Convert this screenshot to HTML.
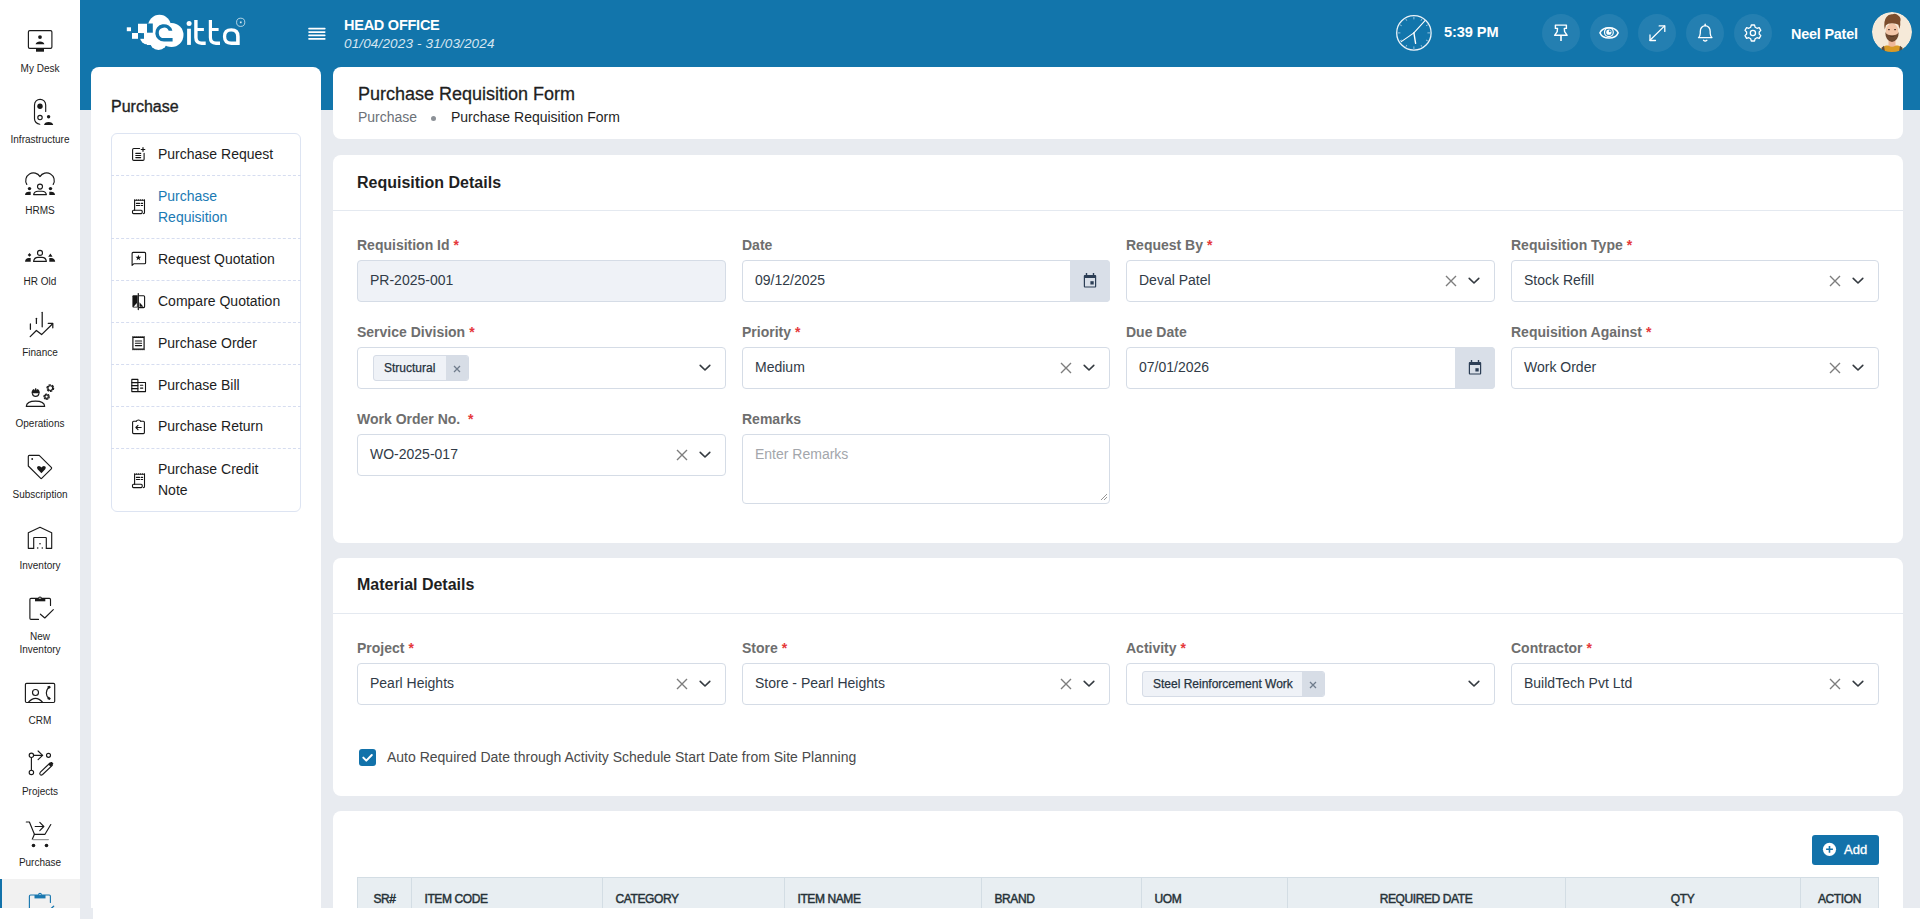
<!DOCTYPE html>
<html><head><meta charset="utf-8">
<style>
*{box-sizing:border-box;margin:0;padding:0}
html,body{width:1920px;height:919px;overflow:hidden;background:#fff;font-family:"Liberation Sans",sans-serif;color:#222}
.t{position:absolute;line-height:1;white-space:nowrap}
#rail{position:absolute;left:0;top:0;width:80px;height:909px;background:#fff}
#bg{position:absolute;left:80px;top:0;width:1840px;height:908px;background:#e8ebf0}
#hdr{position:absolute;left:80px;top:0;width:1840px;height:110px;background:#1275ab}
.card{position:absolute;background:#fff;border-radius:8px}
.rn{position:absolute;left:0;width:80px;text-align:center;font-size:10px;color:#1e1e1e;line-height:1}
.pl{position:absolute;left:111px;width:190px;border-top:1px dashed #d6ddf0}
.pt{position:absolute;left:158px;font-size:14px;line-height:1;color:#1d1d1d;white-space:nowrap}
.lbl{position:absolute;font-size:14px;font-weight:bold;line-height:1;color:#6e6e6e;white-space:nowrap}
.lbl i{font-style:normal;color:#e5383b;margin-left:4px}
.inp{position:absolute;height:42px;border:1px solid #d5dce6;border-radius:4px;background:#fff}
.val{position:absolute;font-size:14px;line-height:1;color:#313b47;white-space:nowrap}
.ctitle{position:absolute;font-size:16px;font-weight:bold;line-height:1;color:#1f1f1f;white-space:nowrap}
.hr{position:absolute;height:1px;background:#e4e9f0}
.hb{position:absolute;top:14px;width:38px;height:38px;border-radius:50%;background:rgba(255,255,255,0.08)}
.th{position:absolute;top:893px;font-size:12px;line-height:1;color:#263238;white-space:nowrap;letter-spacing:-0.4px;-webkit-text-stroke:0.45px #263238}
.tsep{position:absolute;top:877px;width:1px;height:31px;background:#d3dde4}
</style></head><body>
<div id="rail"></div>
<div id="bg"></div>
<div id="hdr"></div>
<svg style="position:absolute;left:0;top:0" width="80" height="909" viewBox="0 0 80 909" fill="none" stroke="#1a1a1a" stroke-width="1.15" stroke-linecap="round" stroke-linejoin="round">
<!-- My Desk -->
<rect x="28.4" y="30.6" width="23.5" height="17.8" rx="1.4"/>
<rect x="36" y="48.6" width="8" height="3.1" fill="#1a1a1a" stroke="none"/>
<circle cx="40" cy="37.1" r="1.9" fill="#1a1a1a" stroke="none"/>
<path d="M35.6 44.2 Q36.4 41.6 40 41.6 Q43.6 41.6 44.4 44.2 Z" fill="#1a1a1a" stroke="none"/>
<!-- Infrastructure -->
<path d="M45.7 111.4 V104.9 A5.6 5.6 0 0 0 40.1 99.3 A5.6 5.6 0 0 0 34.5 104.9 V118.7 A5.5 5.5 0 0 0 39.8 124.2"/>
<circle cx="40" cy="106.2" r="2.7" fill="#1a1a1a" stroke="none"/>
<circle cx="40" cy="117.5" r="2.2"/>
<circle cx="48.6" cy="116.8" r="1.7" fill="#1a1a1a" stroke="none"/>
<path d="M44 124.9 Q44.6 121.9 48.6 121.9 Q52.6 121.9 53.2 124.9 Z" fill="#1a1a1a" stroke="none"/>
<!-- HRMS -->
<path d="M26.8 184.4 A7.4 7.4 0 0 1 40 176.6 A7.4 7.4 0 0 1 53.2 184.4"/>
<circle cx="29.5" cy="188.6" r="1.7" fill="#1a1a1a" stroke="none"/>
<path d="M25 195 Q25.4 191.8 28.8 191.8 H30.7 V195 Z" fill="#1a1a1a" stroke="none"/>
<circle cx="40" cy="186.6" r="2.5"/>
<path d="M33.6 194.6 Q34.2 191.2 38 191.2 H42 Q45.8 191.2 46.4 194.6 Z"/>
<circle cx="50.5" cy="188.6" r="1.7" fill="#1a1a1a" stroke="none"/>
<path d="M49.3 195 V191.8 H51.2 Q54.6 191.8 55 195 Z" fill="#1a1a1a" stroke="none"/>
<!-- HR Old -->
<path d="M29.5 253 L31.3 254.9 L29.5 256.7 L27.7 254.9 Z" fill="#1a1a1a" stroke="none"/>
<path d="M25 261.8 Q25.4 258.1 28.8 258.1 H30.7 V261.8 Z" fill="#1a1a1a" stroke="none"/>
<circle cx="40" cy="252.9" r="2.5"/>
<path d="M33.6 261.4 Q34.2 257.4 38 257.4 H42 Q45.8 257.4 46.4 261.4 Z"/>
<path d="M50.4 253.5 L52.6 256.8 H48.2 Z" fill="#1a1a1a" stroke="none"/>
<path d="M49.3 261.8 V258.1 H51.2 Q54.6 258.1 55.2 261.8 Z" fill="#1a1a1a" stroke="none"/>
<!-- Finance -->
<g stroke-width="1.25">
<path d="M30.4 323.9 V329.3"/><path d="M36.4 318.3 V323.4"/><path d="M42.2 312.3 V326.8"/>
<path d="M30.2 336.6 L36.4 330.5 L41.6 334.6 L52.4 324"/><path d="M48.2 323.3 H52.8 V327.8"/>
</g>
<!-- Operations -->
<path d="M31.5 393.2 Q31.5 389.6 34 388.9 L34.5 390.5 L35.2 388.3 H36.2 L36.8 390.5 L37.3 388.9 Q39.8 389.6 39.8 393.2 Z" fill="#1a1a1a" stroke="none"/>
<path d="M32.4 393.6 A3.3 3.3 0 0 0 38.9 393.6"/>
<path d="M26.3 406.4 Q26.6 401.1 35.5 401.1 Q44.4 401.1 44.7 406.4 Z"/>
<circle cx="50.3" cy="388.1" r="2.4"/>
<circle cx="50.3" cy="388.1" r="3.3" stroke-width="1.3" stroke-dasharray="1.4 2.05"/>
<circle cx="46.6" cy="396.7" r="1.7"/>
<circle cx="46.6" cy="396.7" r="2.6" stroke-width="1.3" stroke-dasharray="1.2 1.5"/>
<!-- Subscription -->
<path d="M28.3 456.4 Q28.3 455.3 29.4 455.3 H39.2 L51.3 467.4 Q52 468.1 51.3 468.8 L41.9 478.2 Q41.2 478.9 40.5 478.2 L28.3 466 Z"/>
<circle cx="32.2" cy="459" r="0.9" fill="#1a1a1a" stroke="none"/>
<path d="M41.4 473.2 L37.6 469.3 Q36.4 467.9 37.5 466.6 Q38.9 465.4 40.3 466.5 L41.4 467.5 L42.5 466.5 Q43.9 465.4 45.3 466.6 Q46.4 467.9 45.2 469.3 Z" fill="#1a1a1a" stroke="none"/>
<!-- Inventory -->
<path d="M33.7 548.3 H28.3 V532.7 L40 527.3 L51.7 532.7 V548.3 H46.3"/>
<path d="M33.7 548.3 V538 Q33.7 537.5 34.2 537.5 H45.8 Q46.3 537.5 46.3 538 V548.3"/>
<circle cx="40" cy="543.7" r="0.8" fill="#1a1a1a" stroke="none"/>
<circle cx="37.7" cy="548" r="0.8" fill="#1a1a1a" stroke="none"/>
<circle cx="42.3" cy="548" r="0.8" fill="#1a1a1a" stroke="none"/>
<!-- New Inventory -->
<path d="M38.5 619.4 H31 Q29.9 619.4 29.9 618.3 V599.5 Q29.9 598.4 31 598.4 H49.4 Q50.5 598.4 50.5 599.5 V605.5"/>
<rect x="35" y="598.4" width="10.3" height="2.9" fill="#1a1a1a" stroke="none"/>
<circle cx="40" cy="598.3" r="1.3" fill="#fff"/>
<path d="M40.4 614.2 L44.8 618 L53.3 609.7"/>
<!-- CRM -->
<rect x="25.4" y="683.3" width="29.3" height="19.2" rx="1.2"/>
<circle cx="35.5" cy="692.5" r="3"/>
<path d="M28.3 702.3 Q35.5 694.3 42.7 702.3"/>
<path d="M48.5 687.3 Q44.2 692.8 48.5 698.4"/>
<path d="M47.3 686.6 L49.6 685.8 L50.9 687.3 L48.6 689.2 Z" fill="#1a1a1a" stroke="none"/>
<path d="M47.3 699.1 L49.6 699.9 L50.9 698.4 L48.6 696.5 Z" fill="#1a1a1a" stroke="none"/>
<!-- Projects -->
<circle cx="31.4" cy="755.3" r="2.2"/>
<circle cx="31.4" cy="772.4" r="2.2"/>
<circle cx="48.5" cy="755.3" r="2"/>
<path d="M31.4 757.5 V770.2"/><path d="M33.6 755.3 H42.6"/><path d="M38.1 751 L42.6 755.3 L38.1 759.7"/>
<path d="M40.4 772.2 L50 763 L52.3 765.3 L42.6 774.5 Q41.2 775.6 40.2 774.6 Q39.2 773.5 40.4 772.2 Z"/>
<path d="M48.4 764.5 L50.9 762.1 Q51.4 761.7 51.9 762.1 L53.1 763.3 Q53.5 763.8 53.1 764.3 L50.6 766.7 Z" fill="#1a1a1a" stroke="none"/>
<!-- Purchase -->
<path d="M26.3 822 H29.4 L34.4 834.3 H45 L50.8 824.5"/>
<path d="M34.4 834.3 L32.3 839.2"/>
<path d="M33 839.6 H48.3" stroke="#9a9a9a" stroke-width="1.4"/>
<path d="M35.2 826.5 H43.6"/><path d="M39.8 822.3 L43.8 826.5 L39.8 830.7"/>
<circle cx="33.5" cy="845.5" r="1.8" fill="#1a1a1a" stroke="none"/>
<circle cx="46.5" cy="845.5" r="1.8" fill="#1a1a1a" stroke="none"/>
</svg>
<div style="position:absolute;left:0;top:879px;width:80px;height:30px;background:#f1f1f1;overflow:hidden">
<div style="position:absolute;left:0;top:0;width:2px;height:30px;background:#1272aa"></div>
<svg style="position:absolute;left:0;top:-879px" width="80" height="909" fill="none" stroke="#1a78b0" stroke-width="1.15" stroke-linecap="round">
<path d="M29.4 912 V896.2 Q29.4 895 30.6 895 H49.2 Q50.4 895 50.4 896.2 V902.5"/>
<rect x="34.5" y="895" width="11" height="3.4" fill="#1a78b0" stroke="none"/>
<circle cx="40" cy="894.6" r="1.3" fill="#f1f1f1"/>
<path d="M51.2 908.4 L53.6 906.2" stroke-width="1.4"/>
</svg>
</div>
<div class="rn" style="top:63.5px">My Desk</div>
<div class="rn" style="top:134.5px">Infrastructure</div>
<div class="rn" style="top:205.5px">HRMS</div>
<div class="rn" style="top:276.5px">HR Old</div>
<div class="rn" style="top:347.5px">Finance</div>
<div class="rn" style="top:418.5px">Operations</div>
<div class="rn" style="top:489.5px">Subscription</div>
<div class="rn" style="top:560.5px">Inventory</div>
<div class="rn" style="top:631.5px">New</div>
<div class="rn" style="top:644.5px">Inventory</div>
<div class="rn" style="top:715.5px">CRM</div>
<div class="rn" style="top:786.5px">Projects</div>
<div class="rn" style="top:857.5px">Purchase</div>

<svg style="position:absolute;left:110px;top:5px" width="150" height="55" viewBox="0 0 150 55">
<g fill="#fff">
<rect x="16.8" y="22.3" width="4.2" height="3.9"/>
<rect x="22" y="28" width="6" height="5.8"/>
<circle cx="49.5" cy="21.3" r="11.5"/>
<circle cx="61.5" cy="30" r="12"/>
<circle cx="48.5" cy="36" r="9"/>
<circle cx="37.5" cy="32" r="7.5"/>
<rect x="28" y="18.75" width="14" height="9.5"/>
<rect x="37" y="20" width="25" height="20"/>
</g>
<g fill="#1275ab">
<rect x="37" y="18.5" width="5.8" height="9.2"/>
<rect x="28" y="28.1" width="6" height="5.7"/>
<path d="M62.4 25.7 A8.7 8.7 0 1 0 54 36.6 H62.6 V33.1 H54 A5.2 5.2 0 1 1 58.7 25.7 Z"/>
</g>
<g fill="#fff">
<circle cx="79.1" cy="18.4" r="2.5"/>
<rect x="77.1" y="23.7" width="3.8" height="16.2"/>
<path d="M84.2 15.1 H87.6 V22.9 H93.9 V26 H87.6 V32.6 Q87.6 36.6 91.6 36.6 H95.7 V39.9 H91.6 Q84.2 39.9 84.2 32.6 Z"/>
<path d="M98.8 15.1 H102 V22.9 H108.6 V26 H102 V32.6 Q102 36.6 106 36.6 H110 V39.9 H106 Q98.8 39.9 98.8 32.6 Z"/>
<path fill-rule="evenodd" d="M121.3 23.3 Q129.7 23.3 129.7 31.5 V39.9 H121.3 Q112.9 39.9 112.9 31.6 Q112.9 23.3 121.3 23.3 Z M121.1 26.6 Q116.2 26.6 116.2 31.6 Q116.2 36.6 121.1 36.6 H126.1 V31.6 Q126.1 26.6 121.1 26.6 Z"/>
<rect x="129.9" y="16.5" width="1.7" height="1.7" opacity=".85"/>
</g>
<circle cx="130.7" cy="17.3" r="4.1" fill="none" stroke="#fff" stroke-width="0.8" opacity=".85"/>
</svg>
<svg style="position:absolute;left:306px;top:26px" width="22" height="16" viewBox="0 0 22 16">
<g fill="#fff"><rect x="2.2" y="1.8" width="17.4" height="1.7" rx=".8"/><rect x="2.2" y="5.2" width="17.4" height="1.7" rx=".8"/><rect x="2.2" y="8.6" width="17.4" height="1.7" rx=".8"/><rect x="2.2" y="12" width="17.4" height="1.7" rx=".8"/></g>
</svg>
<div class="t" style="left:344px;top:17.5px;font-size:14.5px;font-weight:bold;color:#fff;letter-spacing:-0.25px">HEAD OFFICE</div>
<div class="t" style="left:344px;top:36.5px;font-size:13.5px;font-style:italic;color:#d6e6f1;letter-spacing:0.15px">01/04/2023 - 31/03/2024</div>
<svg style="position:absolute;left:1390px;top:10px" width="48" height="46" viewBox="0 0 48 46" fill="none" stroke="#fff" stroke-linecap="round">
<circle cx="23.9" cy="22.9" r="17.2" stroke-width="1.3" stroke="#eaf2f8"/>
<g stroke="#8fbfdc" stroke-width="1">
<path d="M23.9 7.2 V9"/><path d="M23.9 36.8 V38.6"/><path d="M8.2 22.9 H10"/><path d="M37.8 22.9 H39.6"/>
<path d="M16 9.3 L16.6 10.4"/><path d="M31.8 9.3 L31.2 10.4"/><path d="M10.3 15 L11.4 15.6"/><path d="M37.5 15 L36.4 15.6"/>
<path d="M10.3 30.8 L11.4 30.2"/><path d="M37.5 30.8 L36.4 30.2"/><path d="M16 36.5 L16.6 35.4"/><path d="M31.8 36.5 L31.2 35.4"/>
</g>
<path d="M23.9 22.9 L35 10.6" stroke-width="1.1"/>
<path d="M23.9 22.9 L11.3 31.6" stroke-width="1.1"/>
<path d="M23.9 22.9 L25.6 33.4" stroke-width="1.4"/>
</svg>
<div class="t" style="left:1444px;top:25.2px;font-size:14.6px;font-weight:bold;color:#fff;letter-spacing:-0.1px">5:39 PM</div>
<div class="hb" style="left:1542px"></div>
<div class="hb" style="left:1590px"></div>
<div class="hb" style="left:1638px"></div>
<div class="hb" style="left:1686px"></div>
<div class="hb" style="left:1734px"></div>
<svg style="position:absolute;left:1540px;top:20px" width="240" height="26" viewBox="0 0 240 26" fill="none" stroke="#fff" stroke-width="1.3" stroke-linecap="round" stroke-linejoin="round">
<!-- pin -->
<path d="M15.4 5.1 H26.4 V8.4 H24.3 L24.6 11.6 L27.2 15.3 H14.6 L17.2 11.6 L17.5 8.4 H15.4 Z" stroke-width="1.4"/>
<path d="M21 15.6 V21" stroke-width="1.6" stroke-linecap="butt"/>
<!-- eye -->
<path d="M59.9 12.9 C62.9 6.1 75.2 6.1 78.2 12.9 C75.2 19.7 62.9 19.7 59.9 12.9 Z" stroke-width="1.4"/>
<circle cx="68.9" cy="12.2" r="4.4" stroke-width="1.2"/>
<circle cx="68.9" cy="12.2" r="2.6" fill="#fff" stroke="none"/>
<circle cx="69.8" cy="11.3" r="1" fill="#2280b3" stroke="none"/>
<!-- expand -->
<path d="M110 20.3 L124.6 5.9"/><path d="M119.2 5.9 H124.8 V11.4"/><path d="M110 14.9 V20.5 H115.5"/>
<!-- bell -->
<path d="M158.5 17.6 H172 Q170.3 16 170.2 13.2 V11.6 Q170.2 6.4 165.2 5.7 Q160.3 6.4 160.3 11.6 V13.2 Q160.2 16 158.5 17.6 Z"/>
<path d="M165.2 4.2 V5.6"/><path d="M163.5 20.3 Q165.2 21.7 166.9 20.3"/>
<!-- gear -->
<circle cx="212.9" cy="13" r="2.6"/>
<path d="M211.3 5 H214.5 L215.1 7.2 L217 8.3 L219.2 7.6 L220.8 10.4 L219.2 12 V14 L220.8 15.6 L219.2 18.4 L217 17.7 L215.1 18.8 L214.5 21 H211.3 L210.7 18.8 L208.8 17.7 L206.6 18.4 L205 15.6 L206.6 14 V12 L205 10.4 L206.6 7.6 L208.8 8.3 L210.7 7.2 Z"/>
</svg>
<div class="t" style="left:1791px;top:26.6px;font-size:14.4px;font-weight:bold;color:#fff;letter-spacing:-0.2px">Neel Patel</div>
<svg style="position:absolute;left:1872px;top:12px;overflow:hidden" width="40" height="40" viewBox="0 0 40 40">
<circle cx="20" cy="20" r="20" fill="#f6ead9"/>
<g>
<path d="M7 40 Q9 35 14 33.5 L26 33.5 Q31 35 33 40 Z" fill="#d99a26"/>
<path d="M9.5 35.8 L12 33.8 L13 40 H10.5 Z" fill="#5d4c3f"/>
<path d="M30.5 35.8 L28 33.8 L27 40 H29.5 Z" fill="#5d4c3f"/>
<path d="M16.5 28 H23.5 V33.8 Q20 35.8 16.5 33.8 Z" fill="#eeb79a"/>
<ellipse cx="20" cy="20" rx="6.3" ry="8.8" fill="#f3c6a8"/>
<path d="M13.3 20 Q13.2 28.5 20 30 Q26.8 28.5 26.7 20 L25.8 21.5 Q24.5 23.5 20 23.3 Q15.5 23.5 14.2 21.5 Z" fill="#6f4a30"/>
<path d="M12.8 17.5 Q11.2 9 14.5 5 Q16.5 1.8 20.5 2.2 Q23.8 0.9 26.3 3.4 Q29.6 5.6 28.2 9.8 Q28.8 13.5 27.4 17 L26.4 12.8 Q24.5 11.4 20 11.2 Q15.6 11.4 13.9 13.2 Z" fill="#7b4d2d"/>
<rect x="16.2" y="17" width="1.5" height="1.2" fill="#3a2a20"/>
<rect x="22.3" y="17" width="1.5" height="1.2" fill="#3a2a20"/>
<path d="M18.2 24.5 H21.8" stroke="#4e3322" stroke-width="0.8"/>
</g>
<circle cx="20" cy="20" r="26" fill="none" stroke="#1275ab" stroke-width="12"/>
</svg>

<div class="card" style="left:91px;top:67px;width:230px;height:860px"></div>
<div class="t" style="left:111px;top:99.4px;font-size:16px;color:#1f1f1f;-webkit-text-stroke:0.35px #1f1f1f">Purchase</div>
<div style="position:absolute;left:111px;top:133px;width:190px;height:379px;border:1px solid #dde4f2;border-radius:6px"></div>
<div class="pl" style="top:175px"></div>
<div class="pl" style="top:238px"></div>
<div class="pl" style="top:280px"></div>
<div class="pl" style="top:322px"></div>
<div class="pl" style="top:364px"></div>
<div class="pl" style="top:406px"></div>
<div class="pl" style="top:448px"></div>
<div class="pt" style="top:147.4px">Purchase Request</div>
<div class="pt" style="top:188.9px;color:#1a7ab4">Purchase</div>
<div class="pt" style="top:210.1px;color:#1a7ab4">Requisition</div>
<div class="pt" style="top:251.9px">Request Quotation</div>
<div class="pt" style="top:293.9px">Compare Quotation</div>
<div class="pt" style="top:335.6px">Purchase Order</div>
<div class="pt" style="top:377.6px">Purchase Bill</div>
<div class="pt" style="top:419.4px">Purchase Return</div>
<div class="pt" style="top:461.9px">Purchase Credit</div>
<div class="pt" style="top:482.6px">Note</div>
<svg style="position:absolute;left:120px;top:130px" width="40" height="380" viewBox="120 130 40 380" fill="none" stroke="#141414" stroke-width="1.1" stroke-linecap="round" stroke-linejoin="round">
<!-- Purchase Request -->
<path d="M139.6 148.5 H133.8 Q132.6 148.5 132.6 149.7 V159.2 Q132.6 160.4 133.8 160.4 H142.9 Q144.1 160.4 144.1 159.2 V153.3"/>
<path d="M143 147.7 V151.3 M141.2 149.5 H144.8" stroke-width="1.2"/>
<path d="M135.8 153.4 H140.7 M135.8 155.5 H140.7 M135.8 157.6 H140.7"/>
<!-- Purchase Requisition -->
<path d="M134.6 210.2 V200.3 H144.5 V212.6 Q144.5 213.6 143.5 213.6"/>
<path d="M134.6 199.6 V200.2 M136.6 199.6 V200.2 M138.6 199.6 V200.2 M140.6 199.6 V200.2 M142.6 199.6 V200.2 M144.5 199.6 V200.2" stroke-width="0.8"/>
<path d="M136.4 203.4 H139.6 M141.2 203.4 H142.6 M136.4 205.5 H139.6 M141.2 205.5 H142.6"/>
<path d="M133.5 210.3 H141.2 Q142.2 210.3 142.2 211.3 V212.6 Q142.2 213.6 141.2 213.6 H133.5 Q132.5 213.6 132.5 212.6 V211.3 Q132.5 210.3 133.5 210.3 Z"/>
<!-- Request Quotation -->
<path d="M132.1 265.4 V253.4 Q132.1 252.4 133.1 252.4 H144.6 Q145.6 252.4 145.6 253.4 V262.7 Q145.6 263.7 144.6 263.7 H134 Z"/>
<path d="M138.40 254.80 L139.13 256.79 L141.25 256.87 L139.59 258.19 L140.16 260.23 L138.40 259.05 L136.64 260.23 L137.21 258.19 L135.55 256.87 L137.67 256.79 Z" fill="#141414" stroke="none"/>
<!-- Compare Quotation -->
<path d="M137.7 295.3 H133.4 Q132.4 295.3 132.4 296.3 V306.6 Q132.4 307.6 133.4 307.6 H137.7 Z" fill="#141414" stroke="none"/>
<path d="M138.3 293.6 V309.6" stroke-width="1.2"/>
<path d="M139.4 295.8 H143.6 Q144.6 295.8 144.6 296.8 V306.6 Q144.6 307.6 143.6 307.6 H139.4"/>
<path d="M133.6 306.8 L136.9 303 V306.8 Z" fill="#fff" stroke="none"/>
<path d="M139.5 302.3 L143.4 306.8 H139.5 Z" fill="#141414" stroke="none"/>
<!-- Purchase Order -->
<rect x="132.9" y="337.3" width="11.2" height="11.8" stroke-width="1.2"/>
<path d="M132.4 336.7 H144.6 M132.4 349.7 H144.6" stroke-width="0.7" stroke-dasharray="1 1"/>
<path d="M135.4 341 H141.6 M135.4 343.3 H141.6 M135.4 345.6 H141.6" stroke-width="1.1"/>
<!-- Purchase Bill -->
<path d="M137.9 391.6 H131.8 V379.4 H137.9 V391.6 H145.5 V382.5 H137.9"/>
<path d="M131.8 382.6 H137.9 M131.8 385.6 H137.9 M131.8 388.6 H137.9"/>
<path d="M140.5 385.3 H142.8 M140.5 388.1 H142.8"/>
<!-- Purchase Return -->
<path d="M136.2 421.3 H133.6 Q132.6 421.3 132.6 422.3 V432.6 Q132.6 433.6 133.6 433.6 H143.4 Q144.4 433.6 144.4 432.6 V422.3 Q144.4 421.3 143.4 421.3 H140.8"/>
<path d="M136.3 421.3 Q136.8 420 138.5 420 Q140.2 420 140.7 421.3"/>
<path d="M141.2 427.5 H136 M138 425.4 L135.9 427.5 L138 429.6"/>
<!-- Purchase Credit Note -->
<path d="M134.6 484.2 V474.3 H144.5 V486.6 Q144.5 487.6 143.5 487.6"/>
<path d="M134.6 473.6 V474.2 M136.6 473.6 V474.2 M138.6 473.6 V474.2 M140.6 473.6 V474.2 M142.6 473.6 V474.2 M144.5 473.6 V474.2" stroke-width="0.8"/>
<path d="M136.4 477.4 H139.6 M141.2 477.4 H142.6 M136.4 479.5 H139.6 M141.2 479.5 H142.6"/>
<path d="M133.5 484.3 H141.2 Q142.2 484.3 142.2 485.3 V486.6 Q142.2 487.6 141.2 487.6 H133.5 Q132.5 487.6 132.5 486.6 V485.3 Q132.5 484.3 133.5 484.3 Z"/>
</svg>

<div class="card" style="left:333px;top:67px;width:1570px;height:72px"></div>
<div class="t" style="left:358px;top:84.8px;font-size:18px;color:#1f1f1f;-webkit-text-stroke:0.3px #1f1f1f">Purchase Requisition Form</div>
<div class="t" style="left:358px;top:109.9px;font-size:14px;color:#6c7178">Purchase</div>
<div style="position:absolute;left:430.8px;top:115.5px;width:5px;height:5px;border-radius:50%;background:#8c9197"></div>
<div class="t" style="left:451px;top:109.9px;font-size:14px;color:#1f1f1f">Purchase Requisition Form</div>

<div class="card" style="left:333px;top:155px;width:1570px;height:388px"></div>
<div class="ctitle" style="left:357px;top:174.7px">Requisition Details</div>
<div class="hr" style="left:333px;top:210px;width:1570px"></div>

<div class="card" style="left:333px;top:558px;width:1570px;height:238px"></div>
<div class="ctitle" style="left:357px;top:577.1px">Material Details</div>
<div class="hr" style="left:333px;top:613px;width:1570px"></div>

<div class="card" style="left:333px;top:811px;width:1570px;height:120px"></div>

<div class="lbl" style="left:357px;top:238.35px">Requisition Id<i>*</i></div>
<div class="lbl" style="left:742px;top:238.35px">Date</div>
<div class="lbl" style="left:1126px;top:238.35px">Request By<i>*</i></div>
<div class="lbl" style="left:1511px;top:238.35px">Requisition Type<i>*</i></div>
<div class="inp" style="left:357px;top:260px;width:369px;height:42px;background:#eff2f7"></div>
<div class="val" style="left:370px;top:273.15px">PR-2025-001</div>
<div class="inp" style="left:742px;top:260px;width:368px;height:42px;background:#fff"></div>
<div class="val" style="left:755px;top:273.15px">09/12/2025</div>
<div style="position:absolute;left:1070px;top:260px;width:40px;height:42px;background:#d9dfe8;border-radius:0 4px 4px 0"></div>
<svg style="position:absolute;left:1083px;top:273px" width="14" height="15" viewBox="0 0 14 15"><g fill="#2c3e55"><rect x="2.8" y="0" width="1.4" height="2.6"/><rect x="9.8" y="0" width="1.4" height="2.6"/><path fill-rule="evenodd" d="M1.8 2 H12.2 Q13.2 2 13.2 3 V13.6 Q13.2 14.6 12.2 14.6 H1.8 Q0.8 14.6 0.8 13.6 V3 Q0.8 2 1.8 2 Z M2 5.1 V13.4 H12 V5.1 Z"/><rect x="7.4" y="8.2" width="3.3" height="3.3"/></g></svg>
<div class="inp" style="left:1126px;top:260px;width:369px;height:42px;background:#fff"></div>
<div class="val" style="left:1139px;top:273.15px">Deval Patel</div>
<svg class="ix" style="position:absolute;left:1444.5px;top:275px" width="12" height="12" viewBox="0 0 12 12"><path d="M1 1 L11 11 M11 1 L1 11" stroke="#7d7d7d" stroke-width="1.4" fill="none"/></svg>
<svg style="position:absolute;left:1468px;top:277.3px" width="12" height="8" viewBox="0 0 12 8"><path d="M1.2 1.4 L6 6 L10.8 1.4" stroke="#343a40" stroke-width="1.6" fill="none" stroke-linecap="round" stroke-linejoin="round"/></svg>
<div class="inp" style="left:1511px;top:260px;width:368px;height:42px;background:#fff"></div>
<div class="val" style="left:1524px;top:273.15px">Stock Refill</div>
<svg class="ix" style="position:absolute;left:1828.5px;top:275px" width="12" height="12" viewBox="0 0 12 12"><path d="M1 1 L11 11 M11 1 L1 11" stroke="#7d7d7d" stroke-width="1.4" fill="none"/></svg>
<svg style="position:absolute;left:1852px;top:277.3px" width="12" height="8" viewBox="0 0 12 8"><path d="M1.2 1.4 L6 6 L10.8 1.4" stroke="#343a40" stroke-width="1.6" fill="none" stroke-linecap="round" stroke-linejoin="round"/></svg>
<div class="lbl" style="left:357px;top:325.05px">Service Division<i>*</i></div>
<div class="lbl" style="left:742px;top:325.05px">Priority<i>*</i></div>
<div class="lbl" style="left:1126px;top:325.05px">Due Date</div>
<div class="lbl" style="left:1511px;top:325.05px">Requisition Against<i>*</i></div>
<div class="inp" style="left:357px;top:347px;width:369px;height:42px;background:#fff"></div>
<svg style="position:absolute;left:699px;top:364.3px" width="12" height="8" viewBox="0 0 12 8"><path d="M1.2 1.4 L6 6 L10.8 1.4" stroke="#343a40" stroke-width="1.6" fill="none" stroke-linecap="round" stroke-linejoin="round"/></svg>
<div style="position:absolute;left:373px;top:355.3px;width:95.7px;height:25.3px;border:1px solid #d6dce6;border-radius:3px;background:#eff2f7;overflow:hidden"><div style="position:absolute;right:0;top:0;width:21.5px;height:24px;background:#d7dde6"></div><svg style="position:absolute;right:6.5px;top:8.3px" width="8" height="8" viewBox="0 0 8 8"><path d="M1 1 L7 7 M7 1 L1 7" stroke="#6f7c8c" stroke-width="1.3"/></svg></div>
<div class="t" style="left:384px;top:361.74px;font-size:12px;color:#263340;-webkit-text-stroke:0.25px #263340">Structural</div>
<div class="inp" style="left:742px;top:347px;width:368px;height:42px;background:#fff"></div>
<div class="val" style="left:755px;top:360.15px">Medium</div>
<svg class="ix" style="position:absolute;left:1059.5px;top:362px" width="12" height="12" viewBox="0 0 12 12"><path d="M1 1 L11 11 M11 1 L1 11" stroke="#7d7d7d" stroke-width="1.4" fill="none"/></svg>
<svg style="position:absolute;left:1083px;top:364.3px" width="12" height="8" viewBox="0 0 12 8"><path d="M1.2 1.4 L6 6 L10.8 1.4" stroke="#343a40" stroke-width="1.6" fill="none" stroke-linecap="round" stroke-linejoin="round"/></svg>
<div class="inp" style="left:1126px;top:347px;width:369px;height:42px;background:#fff"></div>
<div class="val" style="left:1139px;top:360.15px">07/01/2026</div>
<div style="position:absolute;left:1455px;top:347px;width:40px;height:42px;background:#d9dfe8;border-radius:0 4px 4px 0"></div>
<svg style="position:absolute;left:1468px;top:360px" width="14" height="15" viewBox="0 0 14 15"><g fill="#2c3e55"><rect x="2.8" y="0" width="1.4" height="2.6"/><rect x="9.8" y="0" width="1.4" height="2.6"/><path fill-rule="evenodd" d="M1.8 2 H12.2 Q13.2 2 13.2 3 V13.6 Q13.2 14.6 12.2 14.6 H1.8 Q0.8 14.6 0.8 13.6 V3 Q0.8 2 1.8 2 Z M2 5.1 V13.4 H12 V5.1 Z"/><rect x="7.4" y="8.2" width="3.3" height="3.3"/></g></svg>
<div class="inp" style="left:1511px;top:347px;width:368px;height:42px;background:#fff"></div>
<div class="val" style="left:1524px;top:360.15px">Work Order</div>
<svg class="ix" style="position:absolute;left:1828.5px;top:362px" width="12" height="12" viewBox="0 0 12 12"><path d="M1 1 L11 11 M11 1 L1 11" stroke="#7d7d7d" stroke-width="1.4" fill="none"/></svg>
<svg style="position:absolute;left:1852px;top:364.3px" width="12" height="8" viewBox="0 0 12 8"><path d="M1.2 1.4 L6 6 L10.8 1.4" stroke="#343a40" stroke-width="1.6" fill="none" stroke-linecap="round" stroke-linejoin="round"/></svg>
<div class="lbl" style="left:357px;top:411.65px">Work Order No.&nbsp;<i>*</i></div>
<div class="lbl" style="left:742px;top:411.65px">Remarks</div>
<div class="inp" style="left:357px;top:433.5px;width:369px;height:42px;background:#fff"></div>
<div class="val" style="left:370px;top:446.65px">WO-2025-017</div>
<svg class="ix" style="position:absolute;left:675.5px;top:448.5px" width="12" height="12" viewBox="0 0 12 12"><path d="M1 1 L11 11 M11 1 L1 11" stroke="#7d7d7d" stroke-width="1.4" fill="none"/></svg>
<svg style="position:absolute;left:699px;top:450.8px" width="12" height="8" viewBox="0 0 12 8"><path d="M1.2 1.4 L6 6 L10.8 1.4" stroke="#343a40" stroke-width="1.6" fill="none" stroke-linecap="round" stroke-linejoin="round"/></svg>
<div class="inp" style="left:742px;top:433.5px;width:368px;height:70px;background:#fff"></div>
<div class="val" style="left:755px;top:446.65px;color:#a3a6ab">Enter Remarks</div>
<svg style="position:absolute;left:1098px;top:491px" width="10" height="10" viewBox="0 0 10 10"><path d="M9 3 L3 9 M9 6 L6 9" stroke="#8a8a8a" stroke-width="0.9"/></svg>
<div class="lbl" style="left:357px;top:641.15px">Project<i>*</i></div>
<div class="lbl" style="left:742px;top:641.15px">Store<i>*</i></div>
<div class="lbl" style="left:1126px;top:641.15px">Activity<i>*</i></div>
<div class="lbl" style="left:1511px;top:641.15px">Contractor<i>*</i></div>
<div class="inp" style="left:357px;top:663px;width:369px;height:42px;background:#fff"></div>
<div class="val" style="left:370px;top:676.15px">Pearl Heights</div>
<svg class="ix" style="position:absolute;left:675.5px;top:678px" width="12" height="12" viewBox="0 0 12 12"><path d="M1 1 L11 11 M11 1 L1 11" stroke="#7d7d7d" stroke-width="1.4" fill="none"/></svg>
<svg style="position:absolute;left:699px;top:680.3px" width="12" height="8" viewBox="0 0 12 8"><path d="M1.2 1.4 L6 6 L10.8 1.4" stroke="#343a40" stroke-width="1.6" fill="none" stroke-linecap="round" stroke-linejoin="round"/></svg>
<div class="inp" style="left:742px;top:663px;width:368px;height:42px;background:#fff"></div>
<div class="val" style="left:755px;top:676.15px">Store - Pearl Heights</div>
<svg class="ix" style="position:absolute;left:1059.5px;top:678px" width="12" height="12" viewBox="0 0 12 12"><path d="M1 1 L11 11 M11 1 L1 11" stroke="#7d7d7d" stroke-width="1.4" fill="none"/></svg>
<svg style="position:absolute;left:1083px;top:680.3px" width="12" height="8" viewBox="0 0 12 8"><path d="M1.2 1.4 L6 6 L10.8 1.4" stroke="#343a40" stroke-width="1.6" fill="none" stroke-linecap="round" stroke-linejoin="round"/></svg>
<div class="inp" style="left:1126px;top:663px;width:369px;height:42px;background:#fff"></div>
<svg style="position:absolute;left:1468px;top:680.3px" width="12" height="8" viewBox="0 0 12 8"><path d="M1.2 1.4 L6 6 L10.8 1.4" stroke="#343a40" stroke-width="1.6" fill="none" stroke-linecap="round" stroke-linejoin="round"/></svg>
<div style="position:absolute;left:1142px;top:671.3px;width:182.6px;height:25.3px;border:1px solid #d6dce6;border-radius:3px;background:#eff2f7;overflow:hidden"><div style="position:absolute;right:0;top:0;width:21.5px;height:24px;background:#d7dde6"></div><svg style="position:absolute;right:6.5px;top:8.3px" width="8" height="8" viewBox="0 0 8 8"><path d="M1 1 L7 7 M7 1 L1 7" stroke="#6f7c8c" stroke-width="1.3"/></svg></div>
<div class="t" style="left:1153px;top:677.74px;font-size:12px;color:#263340;-webkit-text-stroke:0.25px #263340">Steel Reinforcement Work</div>
<div class="inp" style="left:1511px;top:663px;width:368px;height:42px;background:#fff"></div>
<div class="val" style="left:1524px;top:676.15px">BuildTech Pvt Ltd</div>
<svg class="ix" style="position:absolute;left:1828.5px;top:678px" width="12" height="12" viewBox="0 0 12 12"><path d="M1 1 L11 11 M11 1 L1 11" stroke="#7d7d7d" stroke-width="1.4" fill="none"/></svg>
<svg style="position:absolute;left:1852px;top:680.3px" width="12" height="8" viewBox="0 0 12 8"><path d="M1.2 1.4 L6 6 L10.8 1.4" stroke="#343a40" stroke-width="1.6" fill="none" stroke-linecap="round" stroke-linejoin="round"/></svg>
<div style="position:absolute;left:359px;top:749px;width:17px;height:17px;border-radius:3px;background:#1272aa"></div>
<svg style="position:absolute;left:359px;top:749px" width="17" height="17" viewBox="0 0 17 17"><path d="M4.3 8.6 L7.3 11.6 L12.8 6" stroke="#fff" stroke-width="2" fill="none" stroke-linecap="round" stroke-linejoin="round"/></svg>
<div class="t" style="left:387px;top:750.05px;font-size:14px;color:#4a4a4a">Auto Required Date through Activity Schedule Start Date from Site Planning</div>
<div style="position:absolute;left:1812px;top:835px;width:67px;height:30px;border-radius:3px;background:#1272aa"></div>
<svg style="position:absolute;left:1822px;top:842px" width="15" height="15" viewBox="0 0 15 15"><circle cx="7.5" cy="7.3" r="6.6" fill="#fff"/><path d="M7.5 3.9 V10.7 M4.1 7.3 H10.9" stroke="#1272aa" stroke-width="1.6"/></svg>
<div class="t" style="left:1844px;top:842.8px;font-size:13px;color:#fff;-webkit-text-stroke:0.35px #fff">Add</div>
<div style="position:absolute;left:357px;top:877px;width:1522px;height:31px;background:#e8eef2;border:1px solid #d3dde4;border-bottom:none"></div>
<div class="tsep" style="left:411px"></div>
<div class="tsep" style="left:602px"></div>
<div class="tsep" style="left:784px"></div>
<div class="tsep" style="left:981px"></div>
<div class="tsep" style="left:1141px"></div>
<div class="tsep" style="left:1287px"></div>
<div class="tsep" style="left:1565px"></div>
<div class="tsep" style="left:1800px"></div>
<div class="th" style="left:373.4px">SR#</div>
<div class="th" style="left:424.5px">ITEM CODE</div>
<div class="th" style="left:615.5px">CATEGORY</div>
<div class="th" style="left:797.5px">ITEM NAME</div>
<div class="th" style="left:994.5px">BRAND</div>
<div class="th" style="left:1154.5px">UOM</div>
<div class="th" style="left:1287px;width:278px;text-align:center">REQUIRED DATE</div>
<div class="th" style="left:1565px;width:235px;text-align:center">QTY</div>
<div class="th" style="left:1818px">ACTION</div>

<div style="position:absolute;left:0;top:908px;width:1920px;height:11px;background:#fff"></div>
<div style="position:absolute;left:80px;top:908px;width:13px;height:11px;background:#e8ebf0"></div>
</body></html>
